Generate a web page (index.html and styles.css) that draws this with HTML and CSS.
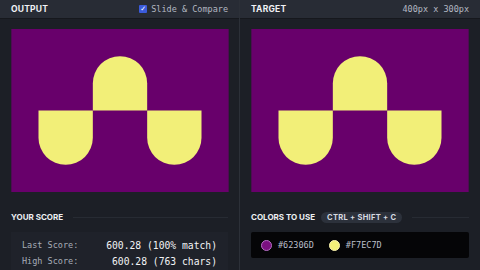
FILE: index.html
```html
<!DOCTYPE html>
<html lang="en">
<head>
    <meta charset="UTF-8">
    <title>Battle</title>
    <link rel="stylesheet" href="styles.css">
</head>
<body>
    <div class="panel left">
        <div class="bar">
            <span class="title">OUTPUT</span>
            <label class="slide"><span class="check">✓</span>Slide &amp; Compare</label>
        </div>
        <div class="canvas">
            <svg viewBox="0 0 400 300" width="218" height="163">
                <rect width="400" height="300" fill="#68006b"/>
                <path d="M150 150 V100 A50 50 0 0 1 250 100 V150 Z" fill="#f2ef78"/>
                <path d="M50 150 H150 V200 A50 50 0 0 1 50 200 Z" fill="#f2ef78"/>
                <path d="M250 150 H350 V200 A50 50 0 0 1 250 200 Z" fill="#f2ef78"/>
            </svg>
        </div>
        <div class="heading"><span>YOUR SCORE</span><i class="rule"></i></div>
        <div class="scores">
            <div class="row"><span class="lbl">Last Score:</span><span class="val">600.28 (100% match)</span></div>
            <div class="row"><span class="lbl">High Score:</span><span class="val">600.28 (763 chars)</span></div>
        </div>
    </div>

    <div class="panel right">
        <div class="bar">
            <span class="title">TARGET</span>
            <span class="size">400px x 300px</span>
        </div>
        <div class="canvas">
            <svg viewBox="0 0 400 300" width="218" height="163">
                <rect width="400" height="300" fill="#68006b"/>
                <path d="M150 150 V100 A50 50 0 0 1 250 100 V150 Z" fill="#f2ef78"/>
                <path d="M50 150 H150 V200 A50 50 0 0 1 50 200 Z" fill="#f2ef78"/>
                <path d="M250 150 H350 V200 A50 50 0 0 1 250 200 Z" fill="#f2ef78"/>
            </svg>
        </div>
        <div class="heading"><span>COLORS TO USE</span><span class="kbd">CTRL + SHIFT + C</span><i class="rule"></i></div>
        <div class="colors">
            <span class="dot purple"></span><span class="hex">#62306D</span>
            <span class="dot yellow"></span><span class="hex">#F7EC7D</span>
        </div>
    </div>
</body>
</html>
```

FILE: styles.css
```css
body {
    margin: 0;
    width: 480px;
    height: 270px;
    overflow: hidden;
    display: flex;
    background-color: #1c1f26;
    font-family: Inter, "Liberation Sans", sans-serif;
    color: #e8eaee;
}

.panel {
    width: 240px;
    display: flex;
    flex-direction: column;
}

.panel.left {
    width: 239px;
    border-right: 1px solid #2c3038;
}

/* barra superior */
.bar {
    height: 18px;
    background-color: #282c35;
    display: flex;
    align-items: center;
    justify-content: space-between;
    padding: 0 11px;
    border-bottom: 1px solid #16181d;
}

.title {
    font-size: 8.5px;
    font-weight: 700;
    letter-spacing: 0.2px;
    color: #f0f1f4;
}

.slide, .size {
    font-family: "DejaVu Sans Mono", monospace;
    font-size: 8.5px;
    color: #b3b8c2;
    display: flex;
    align-items: center;
}

.check {
    width: 8px;
    height: 8px;
    margin-right: 4px;
    background-color: #3b5bdb;
    border-radius: 1px;
    color: #fff;
    font-size: 7px;
    line-height: 8px;
    text-align: center;
    font-family: "DejaVu Sans", sans-serif;
}

.canvas {
    padding: 10px 11px 0;
    height: 163px;
}

.canvas svg {
    display: block;
}

.heading {
    display: flex;
    align-items: center;
    padding: 0 11px;
    margin-top: 19px;
    height: 12px;
    font-size: 8px;
    font-weight: 700;
    color: #eef0f3;
}

.rule {
    flex: 1;
    height: 1px;
    background-color: #272b33;
    margin-left: 10px;
}

.kbd {
    margin-left: 6px;
    padding: 0 6px;
    height: 11px;
    line-height: 11px;
    border-radius: 6px;
    background-color: #2c313b;
    color: #d7dae0;
    font-size: 7.5px;
    letter-spacing: 0.3px;
}

.scores {
    margin: 9px 11px 0;
    padding: 5px 11px 0;
    background-color: #1f222a;
    flex: 1;
    font-family: "DejaVu Sans Mono", monospace;
}

.row {
    display: flex;
    justify-content: space-between;
    align-items: center;
    height: 16px;
}

.lbl {
    font-size: 8.5px;
    color: #a7adb8;
}

.val {
    font-size: 9.7px;
    color: #f2f3f5;
}

.colors {
    margin: 9px 11px 0;
    height: 26px;
    background-color: #050507;
    border-radius: 2px;
    display: flex;
    align-items: center;
    padding: 0 10px;
    font-family: "DejaVu Sans Mono", monospace;
}

.dot {
    width: 9px;
    height: 9px;
    border-radius: 50%;
    margin-right: 6px;
}

.dot.purple {
    background-color: #7a1080;
    border: 1px solid #b56fc4;
}

.dot.yellow {
    background-color: #f2ef78;
    border: 1px solid #fbf4b0;
}

.hex {
    font-size: 8.5px;
    color: #b9bec8;
    margin-right: 15px;
}
```
